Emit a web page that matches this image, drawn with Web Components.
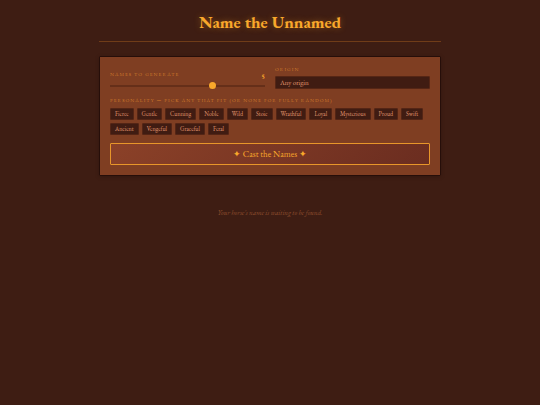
<!DOCTYPE html>
<html lang="en">
<head>
<meta charset="utf-8">
<meta name="viewport" content="width=device-width, initial-scale=1">
<title>Name the Unnamed</title>
<style>
  :root {
    --bg: #3e1d13;
    --panel: #7f3e22;
    --well: #401c12;
    --edge: #260e09;
    --gold: #f9a82b;
    --label: #d07c2c;
    --text: #e09870;
    --muted: #91502f;
  }

  body {
    margin: 0;
    min-height: 100vh;
    background: var(--bg);
    color: var(--text);
    font-family: "EB Garamond", "Liberation Serif", serif;
  }
</style>
</head>
<body>
<name-app></name-app>

<script>
const labelStyles = `
  .label {
    display: block;
    color: var(--label);
    font-size: 5px;
    line-height: 6px;
    letter-spacing: 1px;
    text-transform: uppercase;
  }
`;

class PageTitle extends HTMLElement {
  constructor() {
    super();
    this.attachShadow({ mode: 'open' });
    this.shadowRoot.innerHTML = `
      <style>
        :host {
          display: block;
          padding: 11px 0 7px;
          border-bottom: 1px solid #703c18;
          text-align: center;
        }

        h1 {
          margin: 0;
          color: var(--gold);
          font-size: 17px;
          line-height: 23px;
          text-shadow: 0 0 6px rgba(245, 165, 42, 0.4);
        }
      </style>
      <h1><slot></slot></h1>
    `;
  }
}

class CountSlider extends HTMLElement {
  constructor() {
    super();
    this.attachShadow({ mode: 'open' });
    this.render();
  }

  connectedCallback() {
    const input = this.shadowRoot.querySelector('input');
    const output = this.shadowRoot.querySelector('output');
    input.addEventListener('input', () => {
      output.textContent = input.value;
    });
  }

  render() {
    this.shadowRoot.innerHTML = `
      <style>
        ${labelStyles}

        :host {
          display: block;
        }

        .head {
          display: flex;
          justify-content: space-between;
          align-items: flex-start;
        }

        output {
          padding-top: 2px;
          color: var(--gold);
          font-size: 7px;
          font-weight: bold;
          line-height: 8px;
        }

        input {
          display: block;
          appearance: none;
          width: 100%;
          height: 7px;
          margin: 1px 0 0;
          background: linear-gradient(#652f19, #652f19) center / 100% 2px no-repeat;
        }

        input::-webkit-slider-thumb {
          appearance: none;
          width: 7px;
          height: 7px;
          border-radius: 50%;
          background: var(--gold);
        }
      </style>
      <div class="head">
        <label class="label" for="count">Names to generate</label>
        <output for="count">5</output>
      </div>
      <input id="count" type="range" min="1" max="7" value="5">
    `;
  }
}

class OriginSelect extends HTMLElement {
  constructor() {
    super();
    this.attachShadow({ mode: 'open' });
    this.shadowRoot.innerHTML = `
      <style>
        ${labelStyles}

        :host {
          display: block;
        }

        select {
          display: block;
          appearance: none;
          box-sizing: border-box;
          width: 100%;
          height: 13px;
          margin-top: 4px;
          padding: 0 4px;
          border: 1px solid #562615;
          border-radius: 1px;
          background: var(--well);
          color: var(--text);
          font-family: inherit;
          font-size: 7px;
        }
      </style>
      <label class="label" for="origin">Origin</label>
      <select id="origin">
        <option>Any origin</option>
      </select>
    `;
  }
}

class TraitChip extends HTMLElement {
  constructor() {
    super();
    this.attachShadow({ mode: 'open' });
    this.shadowRoot.innerHTML = `
      <style>
        :host {
          display: block;
        }

        button {
          display: block;
          padding: 0 4px;
          border: 1px solid #542515;
          border-radius: 1px;
          background: var(--well);
          color: var(--text);
          font-family: inherit;
          font-size: 6px;
          line-height: 10px;
          cursor: pointer;
        }

        button[aria-pressed="true"] {
          border-color: var(--gold);
          color: var(--gold);
        }
      </style>
      <button type="button" aria-pressed="false"><slot></slot></button>
    `;
  }

  connectedCallback() {
    const button = this.shadowRoot.querySelector('button');
    button.addEventListener('click', () => {
      const pressed = button.getAttribute('aria-pressed') === 'true';
      button.setAttribute('aria-pressed', String(!pressed));
    });
  }
}

class TraitPicker extends HTMLElement {
  constructor() {
    super();
    this.attachShadow({ mode: 'open' });
    this.shadowRoot.innerHTML = `
      <style>
        ${labelStyles}

        :host {
          display: block;
        }

        .chips {
          display: flex;
          flex-wrap: wrap;
          gap: 3px;
          margin-top: 5px;
        }
      </style>
      <span class="label" id="traits">Personality — pick any that fit (or none for fully random)</span>
      <div class="chips" role="group" aria-labelledby="traits"><slot></slot></div>
    `;
  }
}

class CastButton extends HTMLElement {
  constructor() {
    super();
    this.attachShadow({ mode: 'open' });
    this.shadowRoot.innerHTML = `
      <style>
        :host {
          display: block;
        }

        button {
          display: block;
          width: 100%;
          padding: 0;
          border: 1px solid #e8962a;
          border-radius: 1px;
          background: linear-gradient(135deg, #8b4128, #6b2d20);
          color: var(--gold);
          font-family: inherit;
          font-size: 9px;
          line-height: 20px;
          cursor: pointer;
        }
      </style>
      <button type="button"><slot></slot></button>
    `;
  }
}

class NamePanel extends HTMLElement {
  constructor() {
    super();
    this.attachShadow({ mode: 'open' });
    this.shadowRoot.innerHTML = `
      <style>
        :host {
          display: block;
          margin-top: 14px;
          padding: 9px 10px 10px;
          border: 1px solid var(--edge);
          border-radius: 1px;
          background: var(--panel);
          box-shadow: 0 1px 4px rgba(0, 0, 0, 0.2);
        }

        .row {
          display: grid;
          grid-template-columns: 1fr 1fr;
          gap: 10px;
          align-items: end;
          margin-bottom: 8px;
        }

        .action {
          margin-top: 8px;
        }
      </style>
      <div class="row"><slot name="fields"></slot></div>
      <slot></slot>
      <div class="action"><slot name="action"></slot></div>
    `;
  }
}

class NameApp extends HTMLElement {
  constructor() {
    super();
    this.attachShadow({ mode: 'open' });
    this.render();
  }

  render() {
    const traits = [
      'Fierce', 'Gentle', 'Cunning', 'Noble', 'Wild', 'Stoic', 'Wrathful', 'Loyal',
      'Mysterious', 'Proud', 'Swift', 'Ancient', 'Vengeful', 'Graceful', 'Feral'
    ];

    this.shadowRoot.innerHTML = `
      <style>
        :host {
          display: block;
          max-width: 342px;
          margin: 0 auto;
        }

        .empty {
          margin: 32px 0;
          color: var(--muted);
          font-size: 7px;
          font-style: italic;
          line-height: 10px;
          text-align: center;
        }
      </style>
      <page-title>Name the Unnamed</page-title>
      <name-panel>
        <count-slider slot="fields"></count-slider>
        <origin-select slot="fields"></origin-select>
        <trait-picker>
          ${traits.map(trait => `<trait-chip>${trait}</trait-chip>`).join('')}
        </trait-picker>
        <cast-button slot="action">✦ Cast the Names ✦</cast-button>
      </name-panel>
      <p class="empty">Your horse's name is waiting to be found.</p>
    `;
  }
}

customElements.define('page-title', PageTitle);
customElements.define('count-slider', CountSlider);
customElements.define('origin-select', OriginSelect);
customElements.define('trait-chip', TraitChip);
customElements.define('trait-picker', TraitPicker);
customElements.define('cast-button', CastButton);
customElements.define('name-panel', NamePanel);
customElements.define('name-app', NameApp);
</script>
</body>
</html>
